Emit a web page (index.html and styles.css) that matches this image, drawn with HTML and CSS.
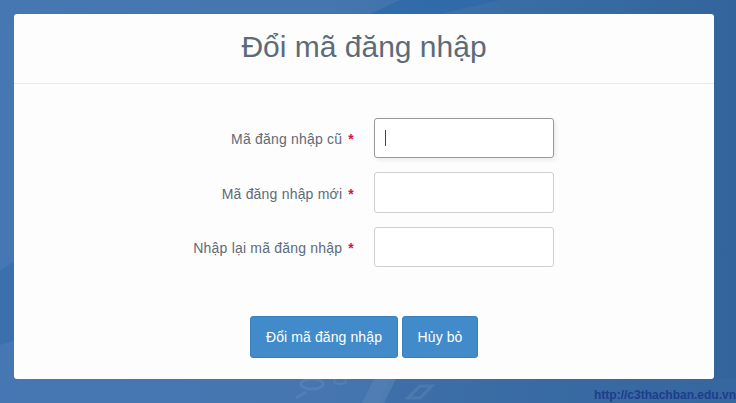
FILE: index.html
```html
<!DOCTYPE html>
<html lang="en">
<head>
<title>Đổi mã đăng nhập</title>
<meta charset="utf-8">
<link rel="stylesheet" href="styles.css">
</head>
<body>
<svg class="backdrop" width="736" height="403" viewBox="0 0 736 403">
  <path d="M370 14 L400 0 L500 0 L440 14 Z" fill="#2c68a8" opacity=".7"/>
  <path d="M0 270 L14 262 L14 340 L0 345 Z" fill="#2f6aa8" opacity=".5"/>
  <path d="M390 379 L736 379 L736 403 L380 403 Z" fill="#3a6aa2" opacity=".45"/>
  <path d="M374 379 L396 379 L384 403 L362 403 Z" fill="#5c86b6" opacity=".55"/>
  <ellipse cx="312" cy="384" rx="11" ry="5" fill="none" stroke="#6f95bf" stroke-width="3" opacity=".3"/>
  <ellipse cx="340" cy="381" rx="6" ry="3" fill="none" stroke="#6f95bf" stroke-width="2" opacity=".3"/>
  <path d="M296 398 L306 392 M408 398 L420 386 L432 386 L420 398 Z" fill="none" stroke="#6f95bf" stroke-width="3" opacity=".3"/>
  <path d="M598 403 Q614 382 628 382 Q642 384 650 403 Z" fill="#3a6aa2" opacity=".5"/>
</svg>

<div class="card">
  <div class="card-head">
    <h1>Đổi mã đăng nhập</h1>
  </div>
  <form class="change-form">
    <div class="rows">
      <div class="row">
        <label>Mã đăng nhập cũ <span class="req">*</span></label>
        <div class="input focused"><span class="caret"></span></div>
      </div>
      <div class="row">
        <label>Mã đăng nhập mới <span class="req">*</span></label>
        <div class="input tall"></div>
      </div>
      <div class="row">
        <label>Nhập lại mã đăng nhập <span class="req">*</span></label>
        <div class="input"></div>
      </div>
    </div>
    <div class="actions">
      <button type="button" class="btn">Đổi mã đăng nhập</button>
      <button type="button" class="btn btn-cancel">Hủy bỏ</button>
    </div>
  </form>
</div>

<div class="site-link">http://c3thachban.edu.vn</div>
</body>
</html>
```

FILE: styles.css
```css
* { margin: 0; padding: 0; box-sizing: border-box; }
html, body { height: 100%; }
body { position: relative; width: 736px; height: 403px; overflow: hidden; padding: 14px 22px 24px 14px; font-family: "Liberation Sans", Arial, sans-serif; font-size: 14px; color: #616a76; background: #4474ae linear-gradient(90deg, #4677b2 0, #4576b0 45%, #3a6ca6 70%, #33649c 100%); }
.backdrop { position: absolute; left: 0; top: 0; }

.card { position: relative; width: 700px; height: 365px; background: #fdfdfd; border-radius: 3px; }
.card-head { height: 70px; border-bottom: 1px solid #eaeaea; text-align: center; }
.card-head h1 { padding-top: 15px; font-size: 30px; line-height: 36px; font-weight: 400; color: #5d6b79; }

.change-form { padding-top: 34px; }
.rows { display: flex; flex-direction: column; gap: 14px; }
.row { display: flex; align-items: center; }
.row label { width: 360px; padding: 2px 20px 0 0; text-align: right; letter-spacing: .2px; }
.req { margin-left: 2px; color: #d6114f; font-weight: 700; }

.input { width: 180px; height: 40px; background: #fff; border: 1px solid #cfcfcf; border-radius: 3px; display: flex; align-items: center; padding-left: 10px; }
.input.tall { height: 41px; }
.input.focused { border-color: #999; box-shadow: 2px 2px 5px rgba(0, 0, 0, .08); }
.caret { width: 1px; height: 16px; background: #444; }

.actions { display: flex; gap: 4px; padding: 49px 0 0 236px; }
.btn { height: 42px; padding: 0 15px; font-family: inherit; font-size: 14px; letter-spacing: .1px; color: #fff; background: #428bca; border: 1px solid #3a7fbd; border-radius: 3px; }
.btn-cancel { width: 76px; padding: 0; }

.site-link { position: absolute; right: 0; bottom: 1px; font-size: 12px; font-weight: 700; line-height: 14px; color: #1f3d8c; }
```
